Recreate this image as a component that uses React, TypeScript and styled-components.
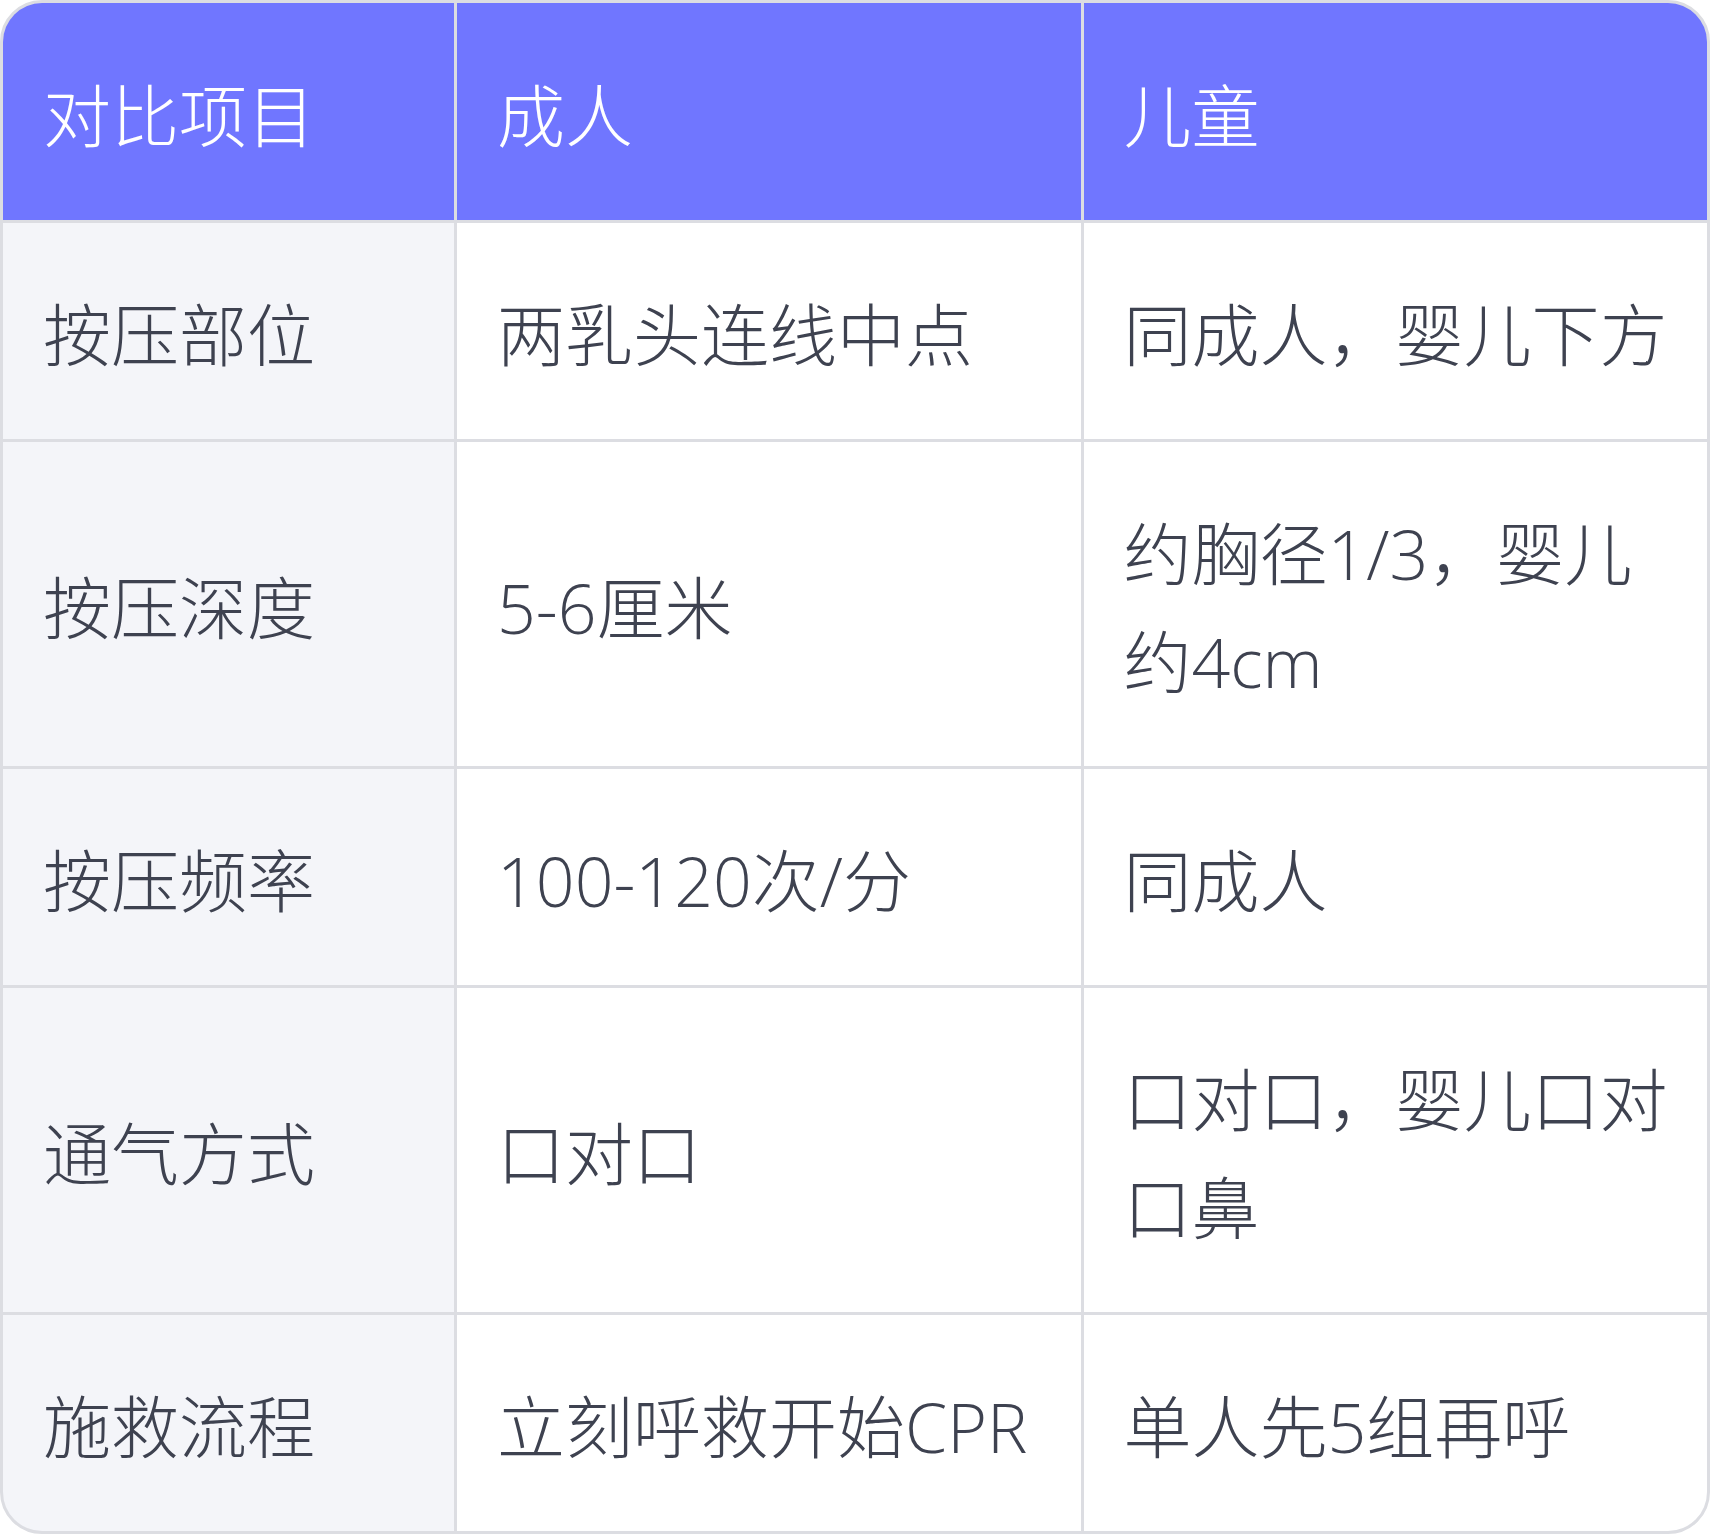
import React from "react";
import styled, { createGlobalStyle, css } from "styled-components";

const Global = createGlobalStyle`
  html, body {
    margin: 0;
    padding: 0;
    background: #ffffff;
  }
  body {
    font-family: "Open Sans", "Noto Sans CJK SC", sans-serif;
  }
`;

const Table = styled.div`
  width: 1710px;
  box-sizing: border-box;
  display: grid;
  grid-template-columns: 451px 1fr 1fr;
  gap: 3px;
  background: #dcdde2;
  border: 3px solid #dcdde2;
  border-radius: 42px;
  overflow: hidden;
`;

type Kind = "head" | "label" | "body";

const Cell = styled.div<{ $kind: Kind }>`
  display: flex;
  align-items: center;
  box-sizing: border-box;
  min-height: 216px;
  padding: 58px 28px 50px 40px;
  font-family: "Open Sans", "Noto Sans CJK SC", sans-serif;
  font-size: 68px;
  font-weight: 300;
  line-height: 108px;
  color: #3e4250;
  background: #ffffff;
  word-break: break-all;
  ${(p) =>
    p.$kind === "head" &&
    css`
      background: #7076ff;
      color: #ffffff;
      min-height: 217px;
    `}
  ${(p) =>
    p.$kind === "label" &&
    css`
      background: #f4f5f9;
    `}
`;

const headers = ["对比项目", "成人", "儿童"];
const rows: [string, string, string][] = [
  ["按压部位", "两乳头连线中点", "同成人，婴儿下方"],
  ["按压深度", "5-6厘米", "约胸径1/3，婴儿约4cm"],
  ["按压频率", "100-120次/分", "同成人"],
  ["通气方式", "口对口", "口对口，婴儿口对口鼻"],
  ["施救流程", "立刻呼救开始CPR", "单人先5组再呼"],
];

export default function App() {
  return (
    <>
      <Global />
      <Table>
        {headers.map((h) => (
          <Cell key={h} $kind="head">
            {h}
          </Cell>
        ))}
        {rows.map((r) => (
          <React.Fragment key={r[0]}>
            <Cell $kind="label">{r[0]}</Cell>
            <Cell $kind="body">{r[1]}</Cell>
            <Cell $kind="body">{r[2]}</Cell>
          </React.Fragment>
        ))}
      </Table>
    </>
  );
}
